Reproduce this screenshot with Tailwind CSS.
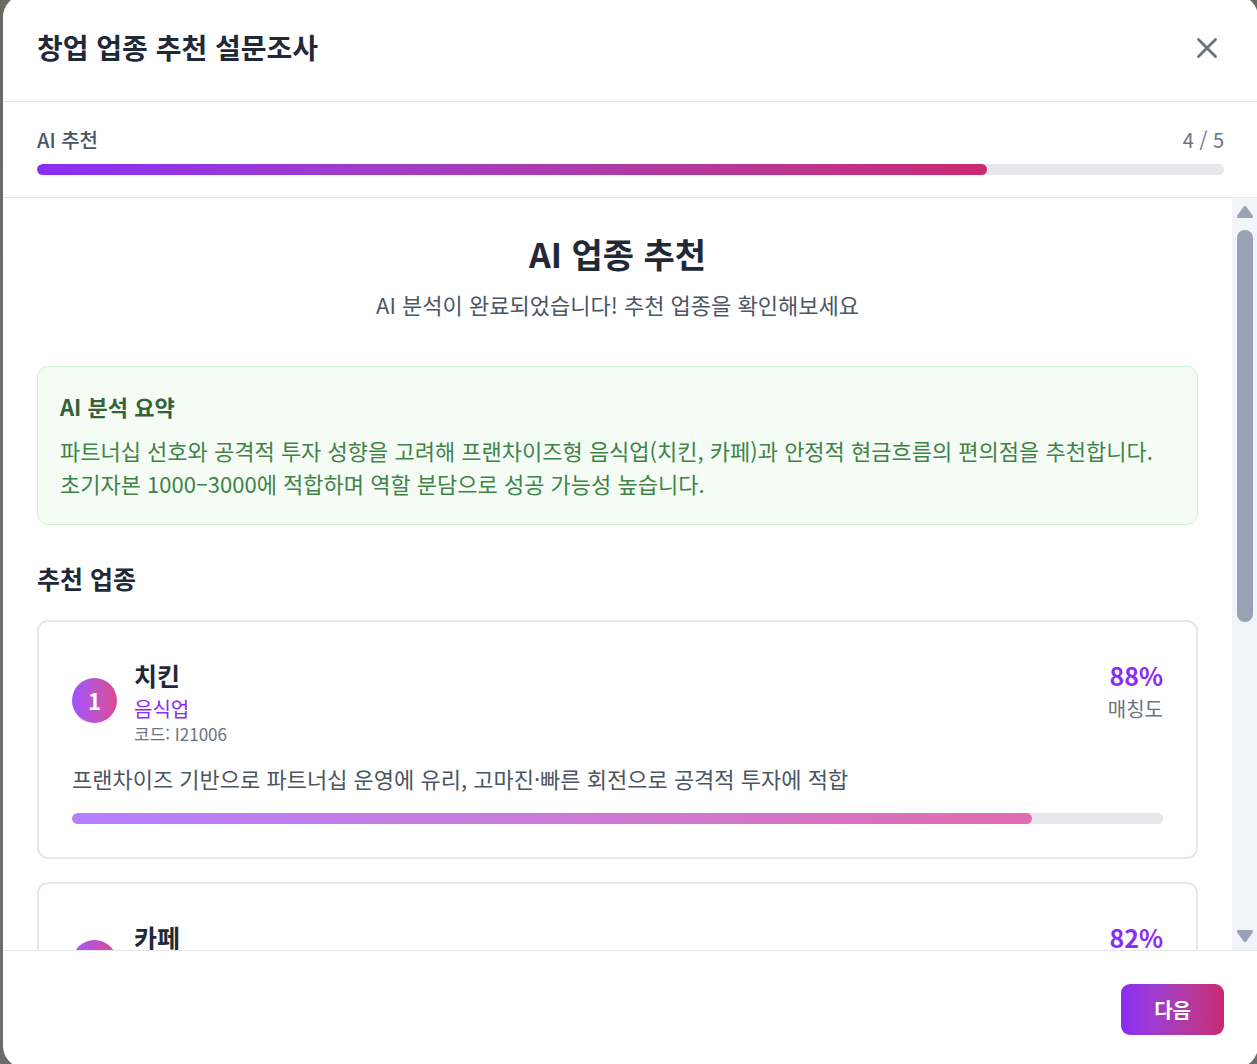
<!DOCTYPE html>
<html lang="ko">
<head>
<meta charset="utf-8">
<meta name="viewport" content="width=device-width, initial-scale=1">
<title>창업 업종 추천 설문조사</title>
<script src="https://cdn.jsdelivr.net/npm/@tailwindcss/browser@4"></script>
</head>
<body class="h-screen overflow-hidden bg-gradient-to-b from-[#686963] via-[#707070] to-[#6c6c6c] font-['Noto_Sans_CJK_KR',sans-serif] text-[#1f2937]">
<div role="dialog" aria-labelledby="dialog-title" class="-mt-[5px] ml-[3px] -mr-px flex h-[calc(100vh+9px)] flex-col overflow-hidden rounded-[22px] bg-white">

  <header class="flex shrink-0 items-start justify-between border-b border-gray-200 px-[34px] py-[33px]">
    <h1 id="dialog-title" class="text-[28px] leading-[39px] font-bold">창업 업종 추천 설문조사</h1>
    <button type="button" aria-label="닫기" class="flex h-[40px] items-center text-[#6b7280]">
      <svg class="size-[34px]" viewBox="0 0 24 24" fill="none" stroke="currentColor" stroke-width="2" stroke-linecap="round" stroke-linejoin="round"><path d="M18 6 6 18M6 6l12 12"/></svg>
    </button>
  </header>

  <section class="shrink-0 border-b border-gray-200 px-[34px] pt-[24px] pb-[22px]">
    <div class="mb-[10px] flex justify-between text-[20px] leading-[28px]">
      <span class="font-medium text-[#4b5563]">AI 추천</span>
      <span class="text-[#6b7280]">4 / 5</span>
    </div>
    <div class="h-[11px] overflow-hidden rounded-full bg-gray-200">
      <div class="h-full rounded-full bg-linear-to-r from-[#8b2cf5] to-[#ca2872]" style="width:80%"></div>
    </div>
  </section>

  <div class="flex min-h-0 flex-1">
    <main class="min-w-0 flex-1 overflow-y-auto px-[34px] py-[33px] [scrollbar-width:none]">
      <div class="mb-[45px] text-center">
        <h2 class="mb-[11px] text-[34px] leading-[45px] font-bold">AI 업종 추천</h2>
        <p class="text-[22px] leading-[34px] text-[#4b5563]">AI 분석이 완료되었습니다! 추천 업종을 확인해보세요</p>
      </div>

      <section class="mb-[34px] rounded-[11px] border border-[#c8f5d0] bg-[#f5fcf6] px-[22px] pt-[22px] pb-[24px]">
        <h3 class="mb-[11px] text-[22px] leading-[34px] font-bold text-[#336237]">AI 분석 요약</h3>
        <p class="text-[22px] leading-[33px] text-[#3f8347]">파트너십 선호와 공격적 투자 성향을 고려해 프랜차이즈형 음식업(치킨, 카페)과 안정적 현금흐름의 편의점을 추천합니다. 초기자본 1000–3000에 적합하며 역할 분담으로 성공 가능성 높습니다.</p>
      </section>

      <h3 class="mb-[22px] text-[25px] leading-[39px] font-bold">추천 업종</h3>

      <div class="flex flex-col gap-[23px]">
        <article class="rounded-[11px] border-2 border-gray-200 p-[33px]">
          <div class="mb-[17px] flex items-start justify-between">
            <div class="flex items-center gap-[17px]">
              <div class="flex size-[45px] items-center justify-center rounded-full bg-linear-to-r from-[#a050ff] to-[#dc4890] text-[22px] leading-[34px] font-bold text-white">1</div>
              <div>
                <h4 class="text-[25px] leading-[40px] font-bold">치킨</h4>
                <p class="text-[20px] leading-[28px] text-[#8b2cf5]">음식업</p>
                <p class="text-[17px] leading-[22px] text-[#6b7280]">코드: I21006</p>
              </div>
            </div>
            <div class="text-right">
              <div class="text-[25px] leading-[40px] font-bold text-[#8b2cf5]">88%</div>
              <div class="text-[20px] leading-[28px] text-[#6b7280]">매칭도</div>
            </div>
          </div>
          <p class="mb-[18px] text-[22px] leading-[33px] text-[#4b5563]">프랜차이즈 기반으로 파트너십 운영에 유리, 고마진·빠른 회전으로 공격적 투자에 적합</p>
          <div class="h-[11px] overflow-hidden rounded-full bg-gray-200">
            <div class="h-full rounded-full bg-linear-to-r from-[#b481ff] to-[#e06cb0]" style="width:88%"></div>
          </div>
        </article>

        <article class="rounded-[11px] border-2 border-gray-200 p-[33px]">
          <div class="flex items-start justify-between">
            <div class="flex items-center gap-[17px]">
              <div class="flex size-[45px] items-center justify-center rounded-full bg-linear-to-r from-[#a050ff] to-[#dc4890] text-[22px] leading-[34px] font-bold text-white">2</div>
              <div>
                <h4 class="text-[25px] leading-[40px] font-bold">카페</h4>
                <p class="text-[20px] leading-[28px] text-[#8b2cf5]">음식업</p>
                <p class="text-[17px] leading-[22px] text-[#6b7280]">코드: I21201</p>
              </div>
            </div>
            <div class="text-right">
              <div class="text-[25px] leading-[40px] font-bold text-[#8b2cf5]">82%</div>
              <div class="text-[20px] leading-[28px] text-[#6b7280]">매칭도</div>
            </div>
          </div>
        </article>
      </div>
    </main>

    <div aria-hidden="true" class="flex w-[26px] shrink-0 flex-col items-center bg-[#f1f5f9] py-[8px] pr-[1px] text-[#99a3b5]">
      <svg class="h-[12px] w-[16px]" viewBox="0 0 16 12" fill="currentColor" stroke="currentColor" stroke-width="3" stroke-linejoin="round"><path d="M8 1.5 14.5 10.5H1.5z"/></svg>
      <div class="my-[12px] flex w-[16px] flex-1 flex-col"><div class="rounded-full bg-[#99a3b5]" style="height:57%"></div></div>
      <svg class="h-[12px] w-[16px]" viewBox="0 0 16 12" fill="currentColor" stroke="currentColor" stroke-width="3" stroke-linejoin="round"><path d="M8 10.5 1.5 1.5h13z"/></svg>
    </div>
  </div>

  <footer class="flex shrink-0 justify-end border-t border-gray-200 px-[34px] py-[33px]">
    <button type="button" class="rounded-[9px] bg-linear-to-r from-[#8b2cf5] to-[#ca2872] px-[33px] py-[11px] text-[20px] leading-[29px] font-bold text-white">다음</button>
  </footer>
</div>
</body>
</html>
